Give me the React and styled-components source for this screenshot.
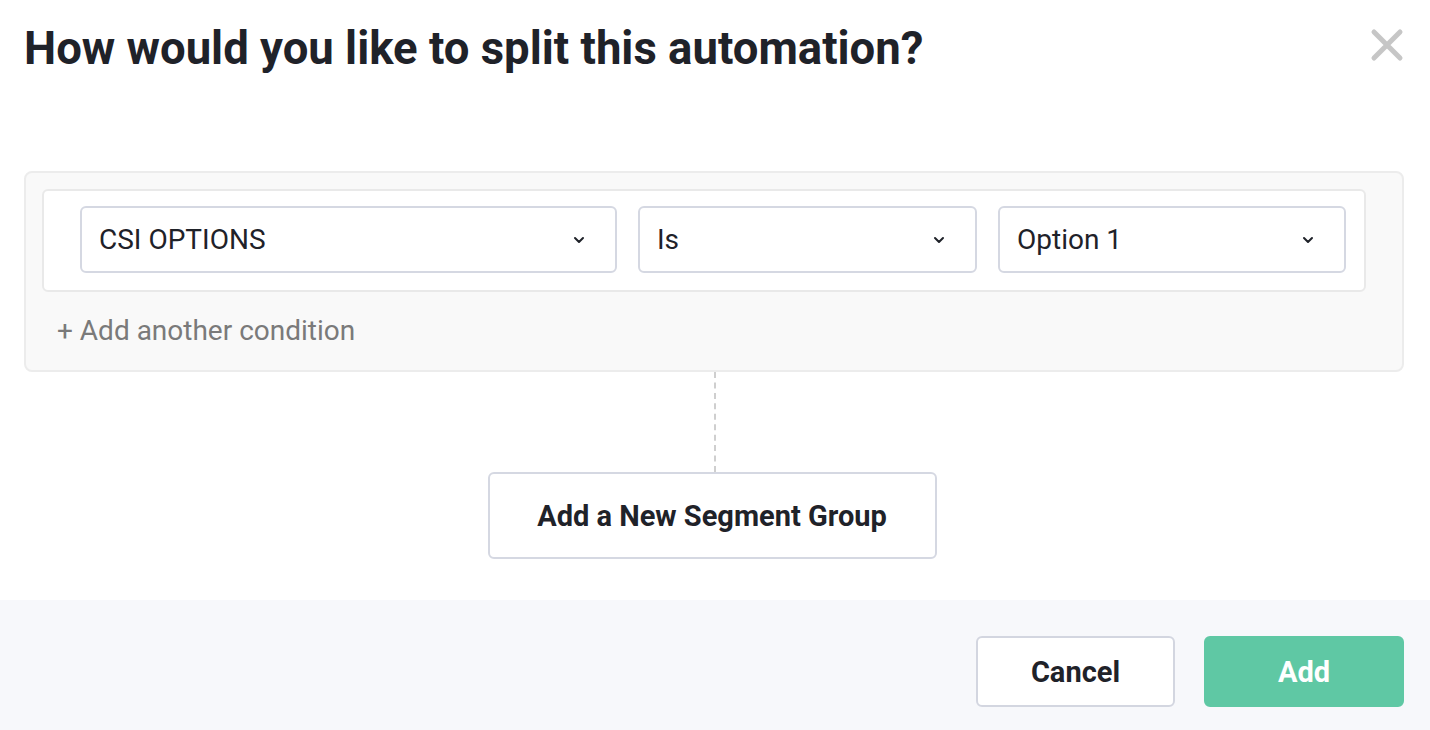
import styled, { createGlobalStyle } from "styled-components";

const GlobalStyle = createGlobalStyle`
  html, body {
    margin: 0;
    padding: 0;
    background: #ffffff;
    font-family: Roboto, "Noto Sans", "Liberation Sans", sans-serif;
    color: #1f2229;
  }
  * { box-sizing: border-box; }
`;

const Modal = styled.div`
  width: 1430px;
  height: 730px;
  display: flex;
  flex-direction: column;
  background: #fff;
`;

const Body = styled.div`
  flex: 1;
  padding: 0 26px 0 24px;
  display: flex;
  flex-direction: column;
`;

const Header = styled.div`
  display: flex;
  justify-content: space-between;
  align-items: flex-start;
  height: 171px;
  padding-top: 22px;
`;

const Title = styled.h1`
  margin: 0;
  font-size: 45.5px;
  line-height: 54px;
  font-weight: 700;
  color: #1f2229;
`;

const CloseBtn = styled.button`
  border: 0;
  background: none;
  padding: 0;
  margin-top: 6px;
  width: 34px;
  height: 34px;
  cursor: pointer;
`;

const Panel = styled.div`
  background: #f9f9f9;
  border: 2px solid #ececec;
  border-radius: 8px;
  padding: 16px 36px 0 16px;
  height: 201px;
`;

const ConditionCard = styled.div`
  background: #fff;
  border: 2px solid #e9e9e9;
  border-radius: 6px;
  padding: 15px 18px 17px 36px;
  display: grid;
  grid-template-columns: 537px 339px 1fr;
  gap: 21px;
`;

const Select = styled.div`
  height: 67px;
  border: 2px solid #d5d8e2;
  border-radius: 6px;
  display: flex;
  align-items: center;
  justify-content: space-between;
  padding: 0 30px 0 17px;
  font-size: 28px;
  color: #1f2229;
  background: #fff;
`;

const AddCondition = styled.div`
  margin-top: 22px;
  padding-left: 15px;
  font-size: 28px;
  color: #7a7a7a;
`;

const Connector = styled.div`
  display: flex;
  flex-direction: column;
  align-items: center;
`;

const DashedLine = styled.div`
  height: 100px;
  border-left: 2px dashed #cfcfcf;
  margin-left: 2px;
`;

const SegmentButton = styled.button`
  width: 449px;
  height: 87px;
  background: #fff;
  border: 2px solid #d5d8e2;
  border-radius: 6px;
  font-family: inherit;
  font-size: 29px;
  font-weight: 700;
  color: #1f2229;
  margin-left: -4px;
`;

const Footer = styled.div`
  height: 130px;
  background: #f7f8fb;
  display: flex;
  justify-content: flex-end;
  align-items: flex-start;
  gap: 29px;
  padding: 36px 26px 0 0;
`;

const FooterButton = styled.button`
  width: ${p => (p.primary ? "200px" : "199px")};
  height: 71px;
  border-radius: 6px;
  border: 2px solid ${p => (p.primary ? "#5fc8a4" : "#d3d6e0")};
  background: ${p => (p.primary ? "#5fc8a4" : "#fff")};
  color: ${p => (p.primary ? "#fff" : "#1f2229")};
  font-family: inherit;
  font-size: 29px;
  font-weight: 700;
`;

function Chevron() {
  return (
    <svg width="12" height="8" viewBox="0 0 12 8" fill="none">
      <path d="M2 2l4 4 4-4" stroke="#1f2229" strokeWidth="2" strokeLinecap="round" strokeLinejoin="round" />
    </svg>
  );
}

function CloseIcon() {
  return (
    <svg width="34" height="34" viewBox="0 0 34 34">
      <path d="M4 4L30 30M30 4L4 30" stroke="#c6c6c6" strokeWidth="5" strokeLinecap="round" />
    </svg>
  );
}

export default function App() {
  const fields = ["CSI OPTIONS", "Is", "Option 1"];
  return (
    <>
      <GlobalStyle />
      <Modal>
        <Body>
          <Header>
            <Title>How would you like to split this automation?</Title>
            <CloseBtn aria-label="Close"><CloseIcon /></CloseBtn>
          </Header>
          <Panel>
            <ConditionCard>
              {fields.map(f => (
                <Select key={f}>
                  <span>{f}</span>
                  <Chevron />
                </Select>
              ))}
            </ConditionCard>
            <AddCondition>+ Add another condition</AddCondition>
          </Panel>
          <Connector>
            <DashedLine />
            <SegmentButton>Add a New Segment Group</SegmentButton>
          </Connector>
        </Body>
        <Footer>
          <FooterButton>Cancel</FooterButton>
          <FooterButton primary>Add</FooterButton>
        </Footer>
      </Modal>
    </>
  );
}
